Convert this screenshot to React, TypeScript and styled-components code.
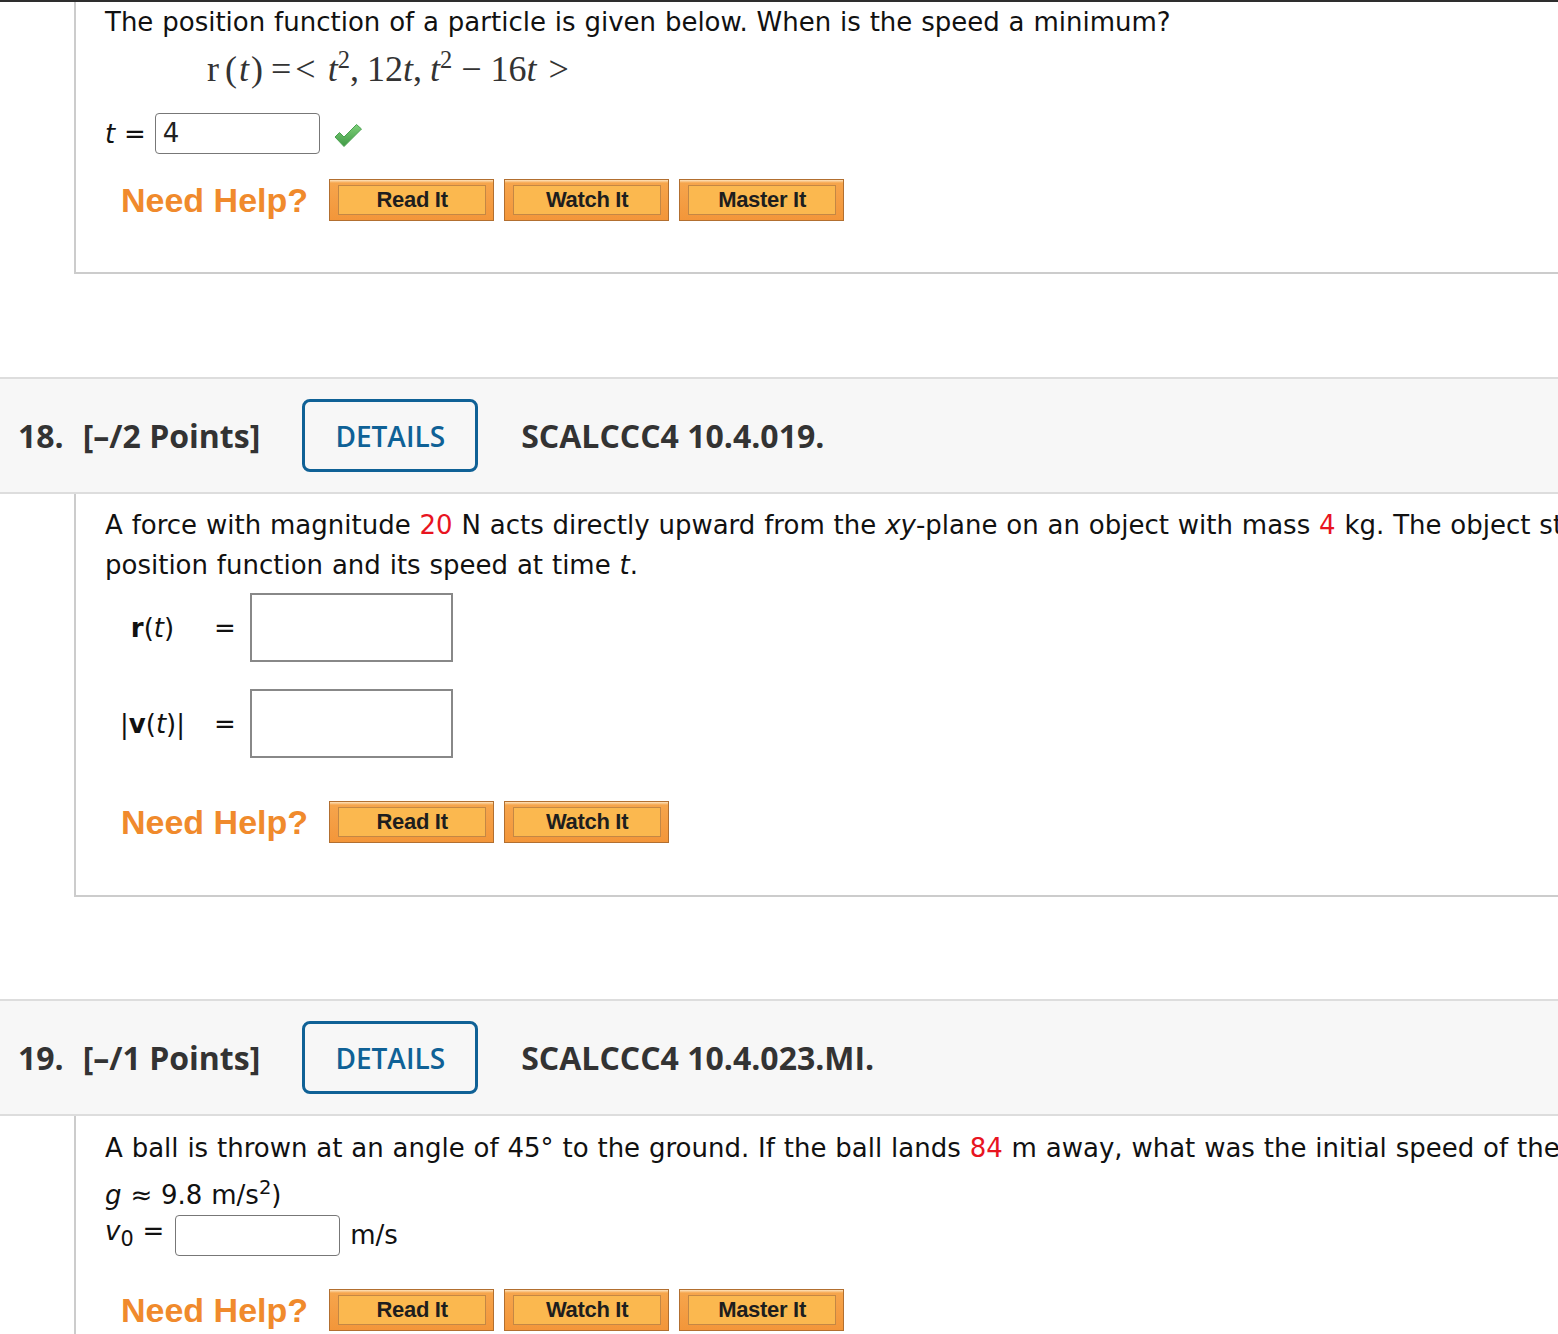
import React from 'react';
import styled, { createGlobalStyle } from 'styled-components';

const GlobalStyle = createGlobalStyle`
  html, body {
    margin: 0;
    padding: 0;
    background: #ffffff;
    overflow: hidden;
  }
  body {
    font-family: "DejaVu Sans", Verdana, sans-serif;
    color: #111111;
  }
`;

const Page = styled.div`
  width: 1558px;
  border-top: 2px solid #2e2e2e;
  overflow: hidden;
`;

const Question = styled.section<{ $gap: number }>`
  margin-top: ${(p) => p.$gap}px;
`;

const Header = styled.div`
  display: flex;
  align-items: center;
  height: 113px;
  padding-left: 18px;
  background: #f7f7f7;
  border-top: 2px solid #dddddd;
  border-bottom: 2px solid #dddddd;
  font-family: "Open Sans", "DejaVu Sans", sans-serif;
  font-weight: 700;
  font-size: 32px;
  color: #333333;
  white-space: nowrap;
`;

const Points = styled.span`
  margin-left: 19px;
`;

const DetailsButton = styled.button`
  box-sizing: border-box;
  width: 176px;
  height: 73px;
  margin: 0 43px 0 42px;
  border: 3px solid #0f6196;
  border-radius: 8px;
  background: transparent;
  font-family: "Open Sans", "DejaVu Sans", sans-serif;
  font-weight: 600;
  font-size: 28px;
  color: #0f6196;
  padding: 0;
`;

const Panel = styled.div<{ $top: number; $bottom: number }>`
  margin-left: 74px;
  border-left: 2px solid #cccccc;
  border-bottom: 2px solid #cccccc;
  padding: ${(p) => p.$top}px 0 ${(p) => p.$bottom}px 29px;
  font-size: 26px;
  line-height: 40px;
  word-spacing: 0.6px;
`;

const Line = styled.div`
  white-space: nowrap;
`;

const Red = styled.span`
  color: #e8141f;
`;

const MathLine = styled.div`
  margin-left: 102px;
  height: 55px;
  line-height: 55px;
  font-family: "Liberation Serif", "DejaVu Serif", serif;
  font-size: 36px;
  color: #333333;
  white-space: nowrap;
  word-spacing: 0;

  sup {
    font-size: 0.68em;
    line-height: 0;
  }
`;

const Tok = styled.span<{ $l?: number; $r?: number }>`
  display: inline-block;
  margin-left: ${(p) => p.$l ?? 0}px;
  margin-right: ${(p) => p.$r ?? 0}px;
`;

const AnswerRow = styled.div<{ $mt: number }>`
  display: flex;
  align-items: center;
  height: 41px;
  margin-top: ${(p) => p.$mt}px;
  white-space: nowrap;
`;

const AnswerLabel = styled.span<{ $gap: number }>`
  margin-right: ${(p) => p.$gap}px;
  white-space: nowrap;
`;

const SmallInput = styled.div`
  box-sizing: border-box;
  width: 165px;
  height: 41px;
  padding-left: 7px;
  border: 1.5px solid #777777;
  border-radius: 4px;
  background: #ffffff;
  line-height: 38px;
  color: #222222;
`;

const Check = styled.svg`
  margin-left: 13px;
  margin-top: 4px;
`;

const Unit = styled.span`
  margin-left: 10px;
`;

const EqGrid = styled.div`
  display: grid;
  grid-template-columns: 95px 50px auto;
  row-gap: 27px;
  align-items: center;
  margin-top: 8px;
`;

const EqLabel = styled.div`
  text-align: center;
  white-space: nowrap;
`;

const EqSign = styled.div`
  text-align: center;
`;

const BigInput = styled.div`
  box-sizing: border-box;
  width: 203px;
  height: 69px;
  border: 2px solid #888888;
  background: #ffffff;
`;

const HelpRow = styled.div<{ $mt: number }>`
  display: flex;
  align-items: center;
  margin-top: ${(p) => p.$mt}px;
  height: 42px;
`;

const NeedHelp = styled.span`
  margin: 0 21px 0 16px;
  font-family: "Liberation Sans", Arial, sans-serif;
  font-weight: 700;
  font-size: 34px;
  line-height: 42px;
  color: #f08a2c;
  white-space: nowrap;
  word-spacing: 0;
`;

const HelpButton = styled.button`
  box-sizing: border-box;
  width: 165px;
  height: 42px;
  margin-right: 10px;
  padding: 5px 7px 5px 8px;
  border: 1px solid #b26f30;
  background: linear-gradient(#fde3bd 0, #f6a54c 3px, #f3963a 100%);
  cursor: pointer;
`;

const HelpButtonFace = styled.span`
  display: flex;
  align-items: center;
  justify-content: center;
  box-sizing: border-box;
  height: 100%;
  border: 1px solid #c48744;
  background: #fbb84f;
  font-family: "Liberation Sans", Arial, sans-serif;
  font-weight: 700;
  font-size: 22px;
  letter-spacing: -0.3px;
  color: #1e1e1e;
  word-spacing: 0;
`;

const Sup = styled.sup`
  font-size: 0.75em;
`;

const Sub = styled.sub`
  font-size: 0.8em;
  vertical-align: -0.3em;
`;

function Help({ buttons, mt }: { buttons: string[]; mt: number }) {
  return (
    <HelpRow $mt={mt}>
      <NeedHelp>Need Help?</NeedHelp>
      {buttons.map((b) => (
        <HelpButton key={b}>
          <HelpButtonFace>{b}</HelpButtonFace>
        </HelpButton>
      ))}
    </HelpRow>
  );
}

function QuestionHeader({ num, points, code }: { num: number; points: number; code: string }) {
  return (
    <Header>
      <span>{num}.</span>
      <Points>[–/{points} Points]</Points>
      <DetailsButton>DETAILS</DetailsButton>
      <span>{code}</span>
    </Header>
  );
}

function GreenCheck() {
  return (
    <Check width="30" height="26" viewBox="0 0 30 26">
      <defs>
        <linearGradient id="chk" x1="0" y1="0" x2="0" y2="1">
          <stop offset="0" stopColor="#7fd07a" />
          <stop offset="1" stopColor="#3f9a45" />
        </linearGradient>
      </defs>
      <path
        d="M2 14 L6.5 9.5 L11 14 L23.5 1.5 L28.5 6 L11 23.5 Z"
        fill="url(#chk)"
        stroke="#4aa150"
        strokeWidth="1"
        strokeLinejoin="round"
      />
    </Check>
  );
}

export default function App() {
  return (
    <>
      <GlobalStyle />
      <Page>
        <Panel $top={0} $bottom={51}>
          <Line>The position function of a particle is given below. When is the speed a minimum?</Line>
          <MathLine>
            <Tok $r={6}>r</Tok>
            <Tok>(</Tok>
            <Tok $l={2} $r={2}>
              <i>t</i>
            </Tok>
            <Tok $r={8}>)</Tok>
            <Tok $r={4}>=</Tok>
            <Tok $r={12}>&lt;</Tok>
            <i>t</i>
            <sup>2</sup>
            <Tok $r={8}>,</Tok>
            12<i>t</i>
            <Tok $r={8}>,</Tok>
            <i>t</i>
            <sup>2</sup>
            <Tok $l={9} $r={9}>
              −
            </Tok>
            16<i>t</i>
            <Tok $l={12}>&gt;</Tok>
          </MathLine>
          <AnswerRow $mt={16}>
            <AnswerLabel $gap={0}>
              <i>t</i> =&nbsp;
            </AnswerLabel>
            <SmallInput>4</SmallInput>
            <GreenCheck />
          </AnswerRow>
          <Help buttons={['Read It', 'Watch It', 'Master It']} mt={25} />
        </Panel>

        <Question $gap={103}>
          <QuestionHeader num={18} points={2} code="SCALCCC4 10.4.019." />
          <Panel $top={11} $bottom={52}>
            <Line>
              A force with magnitude <Red>20</Red> N acts directly upward from the <i>xy</i>-plane on an object
              with mass <Red>4</Red> kg. The object starts at the origin with initial velocity{' '}
              <b>v</b>(0) = <b>i</b> − <b>j</b>. Find its
            </Line>
            <Line>
              position function and its speed at time <i>t</i>.
            </Line>
            <EqGrid>
              <EqLabel>
                <b>r</b>(<i>t</i>)
              </EqLabel>
              <EqSign>=</EqSign>
              <BigInput />
              <EqLabel>
                |<b>v</b>(<i>t</i>)|
              </EqLabel>
              <EqSign>=</EqSign>
              <BigInput />
            </EqGrid>
            <Help buttons={['Read It', 'Watch It']} mt={43} />
          </Panel>
        </Question>

        <Question $gap={102}>
          <QuestionHeader num={19} points={1} code="SCALCCC4 10.4.023.MI." />
          <Panel $top={12} $bottom={40}>
            <Line>
              A ball is thrown at an angle of 45° to the ground. If the ball lands <Red>84</Red> m away, what was
              the initial speed of the ball? (Let
            </Line>
            <Line>
              <i>g</i> ≈ 9.8 m/s<Sup>2</Sup>)
            </Line>
            <AnswerRow $mt={0}>
              <AnswerLabel $gap={2}>
                <i>v</i>
                <Sub>0</Sub> =&nbsp;
              </AnswerLabel>
              <SmallInput />
              <Unit>m/s</Unit>
            </AnswerRow>
            <Help buttons={['Read It', 'Watch It', 'Master It']} mt={33} />
          </Panel>
        </Question>
      </Page>
    </>
  );
}
